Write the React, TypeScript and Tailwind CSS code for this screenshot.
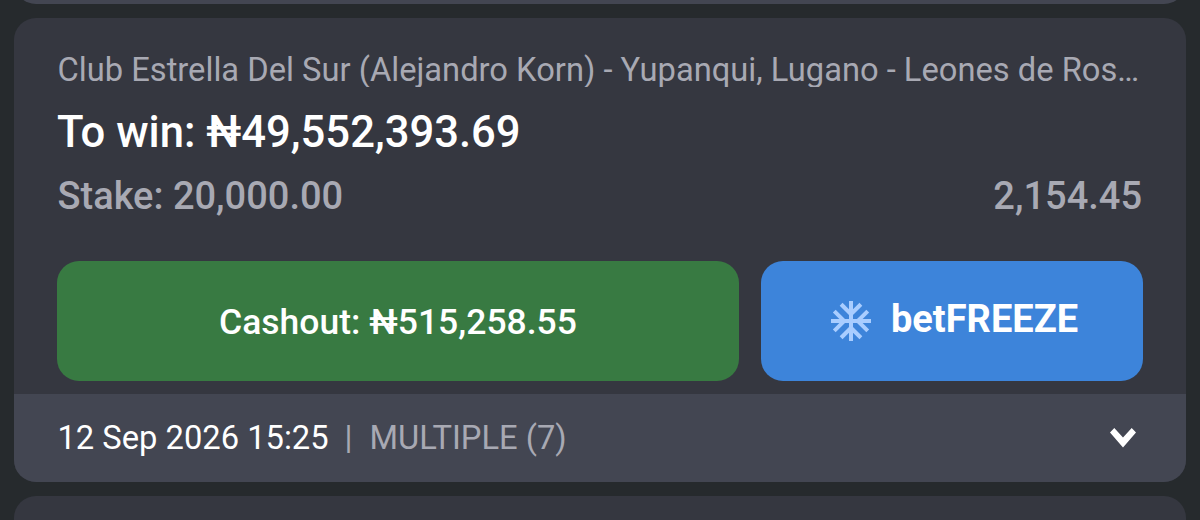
export default function App() {
  return (
    <main className="flex h-[520px] w-full flex-col gap-3.5 overflow-hidden bg-[#262a2d] px-3.5 font-['Roboto',sans-serif]">
      <div className="flex h-1 shrink-0 flex-col justify-end overflow-hidden">
        <div className="h-11 shrink-0 rounded-b-[22px] bg-[#434652]" />
      </div>
      <section className="flex h-[464px] shrink-0 flex-col overflow-hidden rounded-[22px] bg-[#353740]">
        <div className="flex h-[376px] flex-col px-[43px]">
          <p className="mt-[35px] h-[34px] truncate pl-[0.5px] text-[32.7px] leading-[34px] text-[#a8a9b3]">Club Estrella Del Sur (Alejandro Korn) - Yupanqui, Lugano - Leones de Rosario</p>
          <h1 className="mt-[18px] h-14 text-[43.6px] leading-[56px] font-medium text-white">To win: ₦49,552,393.69</h1>
          <div className="mt-[11px] flex h-12 justify-between pr-px pl-[0.5px] text-[38px] leading-[48px] font-medium text-[#a8a9b3]">
            <span>Stake: 20,000.00</span>
            <span>2,154.45</span>
          </div>
          <div className="mt-[41px] flex h-[120px] gap-[22px]">
            <button className="w-[682px] rounded-[22px] bg-[#387a42] pt-[3px] text-[35.5px] font-medium text-white">Cashout: ₦515,258.55</button>
            <button className="flex w-[382px] items-center justify-center gap-5 rounded-[22px] bg-[#3d84da] pl-[5px] text-[38px] font-bold text-white">
              <svg className="size-10" viewBox="2 2 20 20" fill="#a9cdff">
                <path d="M22 11h-4.17l3.24-3.24-1.41-1.42L15 11h-2V9l4.66-4.66-1.42-1.41L13 6.17V2h-2v4.17L7.76 2.93 6.34 4.34 11 9v2H9L4.34 6.34 2.93 7.76 6.17 11H2v2h4.17l-3.24 3.24 1.41 1.42L9 13h2v2l-4.66 4.66 1.42 1.41L11 17.83V22h2v-4.17l3.24 3.24 1.42-1.41L13 15v-2h2l4.66 4.66 1.41-1.42L17.83 13H22z" />
              </svg>
              <span className="pb-1">betFREEZE</span>
            </button>
          </div>
        </div>
        <footer className="flex h-[88px] items-center bg-[#434652] pr-[50px] pl-[43.5px] text-[32.7px]">
          <div className="flex pt-0.5">
            <span className="text-white">12 Sep 2026 15:25</span>
            <span className="mr-[17px] ml-4 text-[#a8a9b3]">|</span>
            <span className="text-[#a8a9b3]">MULTIPLE (7)</span>
          </div>
          <svg className="ml-auto h-5 w-[26px]" viewBox="0 0 26 20" fill="white"><path d="M4.3 0L13 9.6 21.7 0 26 4.5 13 19.5 0 4.5z" /></svg>
        </footer>
      </section>
      <div className="h-[100px] shrink-0 rounded-t-[22px] bg-[#353740]" />
    </main>
  );
}
